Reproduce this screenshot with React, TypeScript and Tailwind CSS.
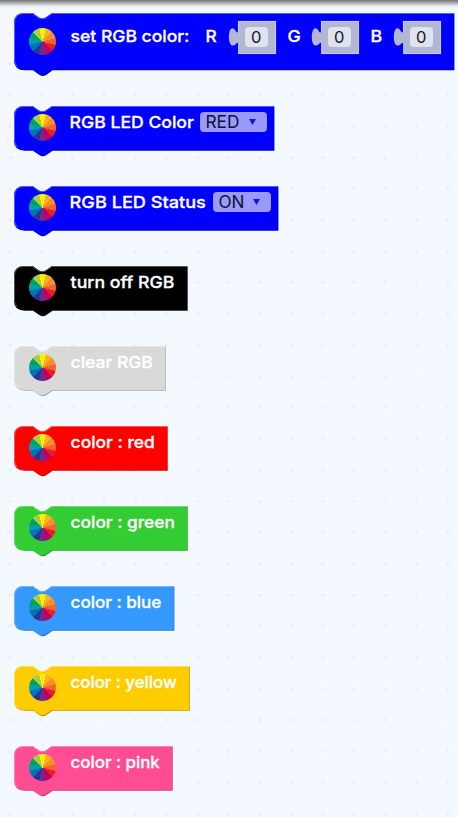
import React from "react";

function Wheel() {
  return (
    <div className="relative ml-[0.7px] mt-[0.5px] h-[27px] w-[27px] shrink-0 rounded-full bg-[conic-gradient(from_-15deg,#fff000_0deg_30deg,#fdb02a_30deg_60deg,#f7902a_60deg_90deg,#f26530_90deg_120deg,#ed1c2c_120deg_150deg,#c1005f_150deg_180deg,#6f2a8e_180deg_210deg,#2b3490_210deg_240deg,#0072bc_240deg_270deg,#00a0b0_270deg_300deg,#00a45c_300deg_330deg,#a5cf4c_330deg_360deg)]" />
  );
}

type ShellProps = {
  width: number;
  height: number;
  fill: string;
  light: string;
  dark: string;
  className: string;
  children: React.ReactNode;
};

function Block({ width, height, fill, light, dark, className, children }: ShellProps) {
  const w = width;
  const h = height;
  return (
    <div className={`relative flex shrink-0 items-start ${className}`} style={{ width: w, height: h }}>
      <svg className="absolute left-0 top-0 overflow-visible" width={w} height={h} fill="none">
        <path
          fill={dark}
          transform="translate(0.6 0.6)"
          d={`M0 10 Q0 0 10 0 H18.5 L25 4.6 Q28.2 6 31.5 4.6 L38 0 H${w - 0.6} V${h - 0.6} H38 L31.5 ${h + 4} Q28.2 ${h + 6} 25 ${h + 4} L18.5 ${h - 0.6} H10 Q0 ${h - 0.6} 0 ${h - 10} Z`}
        />
        <path
          fill={fill}
          d={`M0 10 Q0 0 10 0 H18.5 L25 4.6 Q28.2 6 31.5 4.6 L38 0 H${w - 0.7} V${h - 0.7} H38 L31.5 ${h + 3.5} Q28.2 ${h + 5.4} 25 ${h + 3.5} L18.5 ${h - 0.7} H10 Q0 ${h - 0.7} 0 ${h - 10} Z`}
        />
        <path
          stroke={light}
          d={`M3.2 ${h - 3.8} Q0.5 ${h - 6} 0.5 ${h - 10} V10 Q0.5 0.5 10 0.5 H18.5 L25 5.1 Q28.2 6.5 31.5 5.1 L38 0.5 H${w - 1}`}
        />
      </svg>
      {children}
    </div>
  );
}

const textBase = "relative shrink-0 whitespace-pre font-['Inter',sans-serif] text-[16.5px] leading-5";

function Label({ text, width, className = "" }: { text: string; width: number; className?: string }) {
  return (
    <svg className={`${textBase} h-5 overflow-visible font-medium ${className}`} width={width} fill="white" stroke="white" strokeWidth="0.3">
      <text x="-0.4" y="15" textLength={width + 0.7} lengthAdjust="spacingAndGlyphs">{text}</text>
    </svg>
  );
}

function NumberInput() {
  return (
    <div className="relative flex h-[33px] w-[47px] shrink-0 pl-4 pt-[6px]">
      <svg className="absolute left-0 top-0 overflow-visible" width="47" height="33" fill="none">
        <path fill="#b2b8d3" d="M9 0 H47 V33 H9 V22 C8 20.5 6.5 25.2 3 24.5 C-1.2 23 -1.2 8.5 3 7.2 C6.5 6.8 7 13 9 11 Z" />
        <path stroke="#d5d9e8" strokeWidth="0.7" d="M9.4 11 V0.4 H46.6 V32.6 H9.4" />
      </svg>
      <span className="relative flex h-5 w-[23px] items-center justify-center rounded-[4px] bg-[#dfe3ee] font-['Inter',sans-serif] text-[16.5px] leading-5 text-[#15151d]">0</span>
    </div>
  );
}

function Dropdown({ text, textWidth, className }: { text: string; textWidth: number; className: string }) {
  return (
    <div className={`relative flex h-5 shrink-0 items-center justify-between rounded-[4px] bg-[#9999ff] pl-[6px] pr-[10.5px] ${className}`}>
      <svg className="h-5 overflow-visible font-['Inter',sans-serif] text-[17.5px]" width={textWidth} fill="#10102a">
        <text x="-0.5" y="15.9" textLength={textWidth} lengthAdjust="spacingAndGlyphs">{text}</text>
      </svg>
      <svg width="7" height="6" viewBox="0 0 7 6"><path fill="#1414e6" d="M0 0 H7 L3.5 6 Z" /></svg>
    </div>
  );
}

const simple = [
  { text: "turn off RGB", tw: 103, w: 173.7, fill: "#000000", light: "#555555", dark: "#111111" },
  { text: "clear RGB", tw: 81.5, w: 151.7, fill: "#d9d9d9", light: "#e5e5e5", dark: "#a6a6a6" },
  { text: "color : red", tw: 83.5, w: 153.7, fill: "#ff0000", light: "#ff5959", dark: "#c40000" },
  { text: "color : green", tw: 103.5, w: 173.7, fill: "#33cc33", light: "#70db70", dark: "#269826" },
  { text: "color : blue", tw: 90, w: 160.4, fill: "#3399ff", light: "#70b8ff", dark: "#2673bf" },
  { text: "color : yellow", tw: 105.5, w: 175.8, fill: "#ffcc00", light: "#ffdb4d", dark: "#b99400" },
  { text: "color : pink", tw: 88.5, w: 158.7, fill: "#ff4d94", light: "#ff82b4", dark: "#bf3a6f" },
];

const blue = { fill: "#0000ff", light: "#5959ff", dark: "#0000a8" };

export default function App() {
  return (
    <main className="relative h-[817px] w-[458px] overflow-hidden bg-[#f4f9ff]">
      <svg className="absolute inset-0" width="458" height="817">
        <defs>
          <pattern id="dots" x="-5.4" y="-14.3" width="31.25" height="31.25" patternUnits="userSpaceOnUse">
            <circle cx="15.6" cy="15.6" r="1.6" fill="#e7edf4" />
          </pattern>
        </defs>
        <rect width="458" height="817" fill="url(#dots)" />
      </svg>
      <div className="absolute inset-x-0 top-0 h-[9px] bg-[linear-gradient(#777_0px,#858585_1px,#c2c5c8_4px,#e8ecf0_6px,#f4f9ff_9px)]" />
      <div className="relative flex flex-col pl-[14.3px] pt-[13.3px]">
        <Block {...blue} width={440.4} height={57.3} className="pl-[14px]">
          <div className="mt-[14.4px] flex w-7"><Wheel /></div>
          <Label text="set RGB color:" width={118} className="ml-[14.5px] mt-[14px]" />
          <Label text="R" width={10.5} className="ml-[17.7px] mt-[14px]" />
          <div className="ml-[11.7px] mt-[7.7px] flex"><NumberInput /></div>
          <Label text="G" width={12.5} className="ml-[11.9px] mt-[14px]" />
          <div className="ml-[11.6px] mt-[7.7px] flex"><NumberInput /></div>
          <Label text="B" width={11} className="ml-[12px] mt-[14px]" />
          <div className="ml-[12px] mt-[7.7px] flex"><NumberInput /></div>
        </Block>
        <Block {...blue} width={260.4} height={44.7} className="mt-[35.7px] pl-[14px]">
          <div className="mt-[7.5px] flex w-7"><Wheel /></div>
          <Label text="RGB LED Color" width={123.5} className="ml-[14px] mt-[6.8px]" />
          <Dropdown text="RED" textWidth={34} className="ml-[6px] mt-[5.7px] w-[67px]" />
        </Block>
        <Block {...blue} width={264.4} height={44.7} className="mt-[35.3px] pl-[14px]">
          <div className="mt-[7.5px] flex w-7"><Wheel /></div>
          <Label text="RGB LED Status" width={135.5} className="ml-[14px] mt-[6.8px]" />
          <Dropdown text="ON" textWidth={26} className="ml-[7px] mt-[5.7px] w-[58px]" />
        </Block>
        {simple.map((b) => (
          <Block key={b.text} fill={b.fill} light={b.light} dark={b.dark} width={b.w} height={44.7} className="mt-[35.3px] pl-[14px]">
            <div className="mt-[7.5px] flex w-7"><Wheel /></div>
            <Label text={b.text} width={b.tw} className="ml-[14.5px] mt-[6.8px]" />
          </Block>
        ))}
      </div>
    </main>
  );
}
